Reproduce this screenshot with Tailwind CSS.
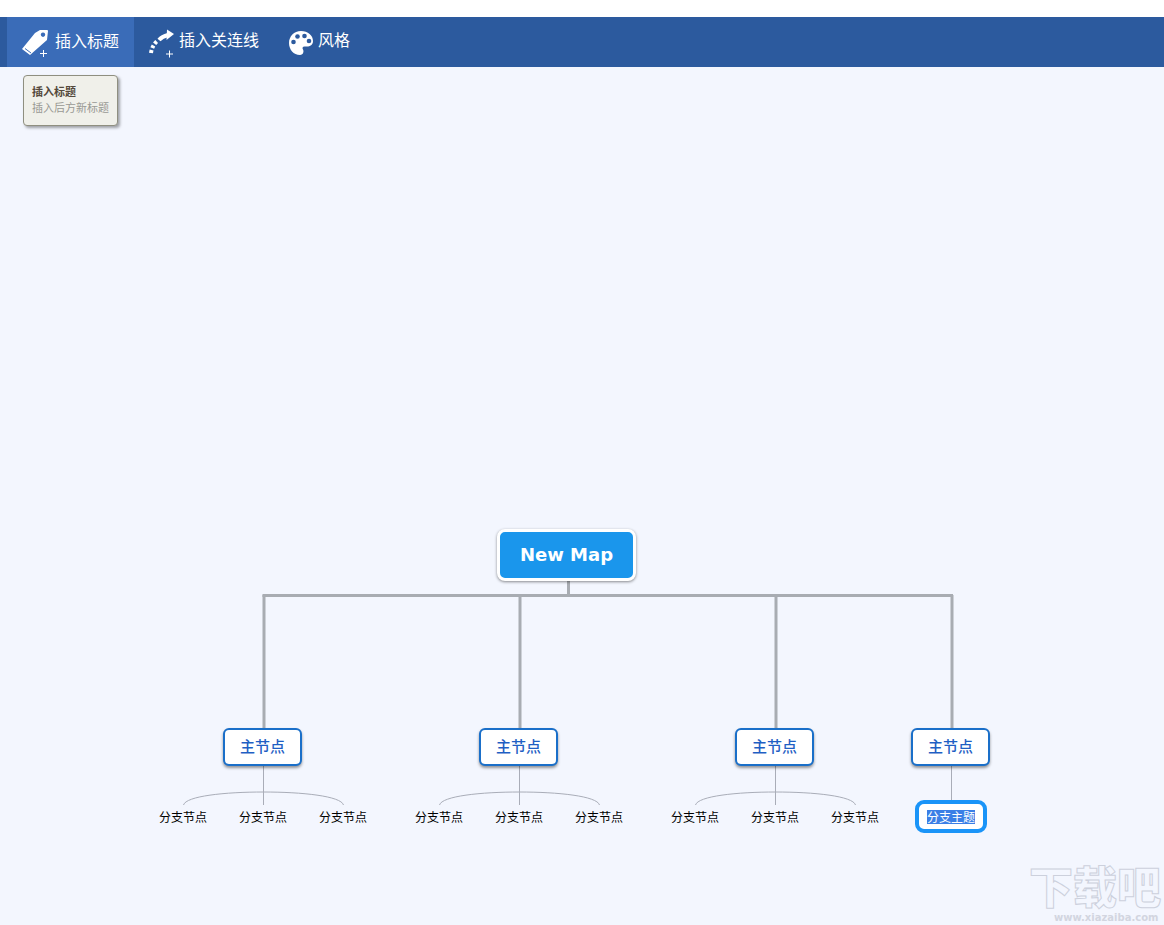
<!DOCTYPE html>
<html lang="zh">
<head>
<meta charset="utf-8">
<script src="https://cdn.jsdelivr.net/npm/@tailwindcss/browser@4"></script>
<title>Mind map</title>
</head>
<body class="bg-white font-['Noto_Sans_CJK_SC',sans-serif]">
<div class="flex flex-col w-[1164px] h-[925px] overflow-hidden">
  <div class="h-[17px] bg-white"></div>
  <div class="h-[50px] bg-[#2c5a9e] flex pl-[7px] text-white text-[16px]">
    <div class="w-[127px] bg-[#3a6cb8] flex items-center pl-[15px] gap-[6px]">
      <svg width="27" height="30" viewBox="0 0 27 30" class="mt-[2px]">
        <path fill="#fff" fill-rule="evenodd" d="M13 5 L18 2 L25 2 Q26 2 26 3 L25 12 L8 27 L0 21 Z M21 4.500 a2.200 2.200 0 1 0 .01 0 Z"/>
        <path stroke="#3a6cb8" stroke-width="1" d="M3 20.500 L9 25"/>
        <path stroke="#fff" stroke-width="1" fill="none" d="M18 25.500 H25 M21.500 22 V29"/>
      </svg>
      <span class="-mt-[5px]">插入标题</span>
    </div>
    <div class="flex items-center pl-[14px] gap-[4px]">
      <svg width="27" height="30" viewBox="0 0 27 30" class="mt-[2px]">
        <path stroke="#fff" stroke-width="4" fill="none" stroke-dasharray="3 2" d="M3 25 Q4 17 10 12.500"/>
        <path stroke="#fff" stroke-width="4" fill="none" d="M11 12 Q14 8.500 20 7"/>
        <path fill="#fff" d="M19 1.500 L26 6 L18.500 12 Z"/>
        <path stroke="#fff" stroke-width="1" fill="none" d="M18 26 H25 M21.500 22.500 V29.500"/>
      </svg>
      <span class="-mt-[7px]">插入关连线</span>
    </div>
    <div class="flex items-center pl-[29px] gap-[4px]">
      <svg width="26" height="26" viewBox="0 0 26 26" class="mt-[1px]">
        <path fill="#fff" d="M13 1 C20 1 25 5.500 25 11 C25 15 22 16.500 19 16.500 L16.500 16.500 C14.500 16.500 14 18 15 19.500 C16 21 15.500 25 12 25 C5.500 25 1 19.500 1 13 C1 6.500 6 1 13 1 Z"/>
        <circle cx="5.500" cy="12" r="2.300" fill="#2c5a9e"/>
        <circle cx="9.500" cy="6.500" r="2.300" fill="#2c5a9e"/>
        <circle cx="16.500" cy="6" r="2.300" fill="#2c5a9e"/>
        <circle cx="21" cy="11" r="2.300" fill="#2c5a9e"/>
      </svg>
      <span class="-mt-[7px]">风格</span>
    </div>
  </div>

  <div class="relative flex-1 bg-[#f3f6fe]">
    <div class="absolute left-[23px] top-[8px] w-[95px] h-[51px] rounded-[4px] border border-[#8f8f80] bg-[#f0f0ea] shadow-[2px_2px_3px_rgba(0,0,0,0.35)] pl-[8px] pt-[7px] text-[11px] leading-[16px]">
      <div class="font-bold text-[#54493c]">插入标题</div>
      <div class="text-[#999994]">插入后方新标题</div>
    </div>

    <svg class="absolute left-0 top-0" width="1164" height="858" viewBox="0 67 1164 858" fill="none">
      <g stroke="#a8acb2" stroke-width="3">
        <path d="M568.500 580 V595.500"/>
        <path d="M262.500 595.500 H953"/>
        <path d="M264 595 V729 M520 595 V729 M776 595 V729 M952 595 V729"/>
      </g>
      <g stroke="#a9adb8" stroke-width="1">
        <path d="M263.500 765 V805 M519.500 765 V805 M775.500 765 V805 M951.500 765 V801"/>
        <path d="M183.500 805 C186 796 225 792 263.500 792 C302 792 341 796 343.500 805"/>
        <path d="M439.500 805 C442 796 481 792 519.500 792 C558 792 597 796 599.500 805"/>
        <path d="M695.500 805 C698 796 737 792 775.500 792 C814 792 853 796 855.500 805"/>
      </g>
    </svg>

    <div class="absolute left-[497px] top-[462px] w-[139px] h-[52px] rounded-[8px] border-[3px] border-white bg-[#1a96ec] shadow-[0_1px_3px_rgba(0,0,0,0.45)] flex items-center justify-center pb-[2px] text-white font-bold text-[18px] font-['DejaVu_Sans',sans-serif]">New Map</div>

    <div class="absolute left-[223px] top-[661px] w-[79px] h-[38px] rounded-[6px] border-2 border-[#1a6fc9] bg-white shadow-[0_2px_3px_rgba(0,0,0,0.4)] flex items-center justify-center pb-[1px] font-medium text-[#1f5fc4] text-[15px]">主节点</div>
    <div class="absolute left-[479px] top-[661px] w-[79px] h-[38px] rounded-[6px] border-2 border-[#1a6fc9] bg-white shadow-[0_2px_3px_rgba(0,0,0,0.4)] flex items-center justify-center pb-[1px] font-medium text-[#1f5fc4] text-[15px]">主节点</div>
    <div class="absolute left-[735px] top-[661px] w-[79px] h-[38px] rounded-[6px] border-2 border-[#1a6fc9] bg-white shadow-[0_2px_3px_rgba(0,0,0,0.4)] flex items-center justify-center pb-[1px] font-medium text-[#1f5fc4] text-[15px]">主节点</div>
    <div class="absolute left-[911px] top-[661px] w-[79px] h-[38px] rounded-[6px] border-2 border-[#1a6fc9] bg-white shadow-[0_2px_3px_rgba(0,0,0,0.4)] flex items-center justify-center pb-[1px] font-medium text-[#1f5fc4] text-[15px]">主节点</div>

    <div class="absolute left-[159px] top-[741px] text-[12px] leading-[18px] text-black">分支节点</div>
    <div class="absolute left-[239px] top-[741px] text-[12px] leading-[18px] text-black">分支节点</div>
    <div class="absolute left-[319px] top-[741px] text-[12px] leading-[18px] text-black">分支节点</div>
    <div class="absolute left-[415px] top-[741px] text-[12px] leading-[18px] text-black">分支节点</div>
    <div class="absolute left-[495px] top-[741px] text-[12px] leading-[18px] text-black">分支节点</div>
    <div class="absolute left-[575px] top-[741px] text-[12px] leading-[18px] text-black">分支节点</div>
    <div class="absolute left-[671px] top-[741px] text-[12px] leading-[18px] text-black">分支节点</div>
    <div class="absolute left-[751px] top-[741px] text-[12px] leading-[18px] text-black">分支节点</div>
    <div class="absolute left-[831px] top-[741px] text-[12px] leading-[18px] text-black">分支节点</div>

    <div class="absolute left-[915px] top-[733px] w-[72px] h-[33px] rounded-[9px] border-4 border-[#1a94f8] bg-white flex items-center justify-center">
      <span class="bg-[#3b7fe6] text-white text-[12px] leading-[14px] block">分支主题</span>
    </div>

    <div class="absolute left-[1029px] top-[796px] w-[135px] select-none">
      <div class="text-[44px] leading-[44px] mb-[5px] font-black whitespace-nowrap text-transparent [-webkit-text-stroke:1px_#ccd0dc]">下载吧</div>
      <div class="text-[10px] leading-[12px] pl-[25px] font-['DejaVu_Sans',sans-serif] font-bold text-[#d2d5e0]">www.xiazaiba.com</div>
    </div>
  </div>
</div>
</body>
</html>
